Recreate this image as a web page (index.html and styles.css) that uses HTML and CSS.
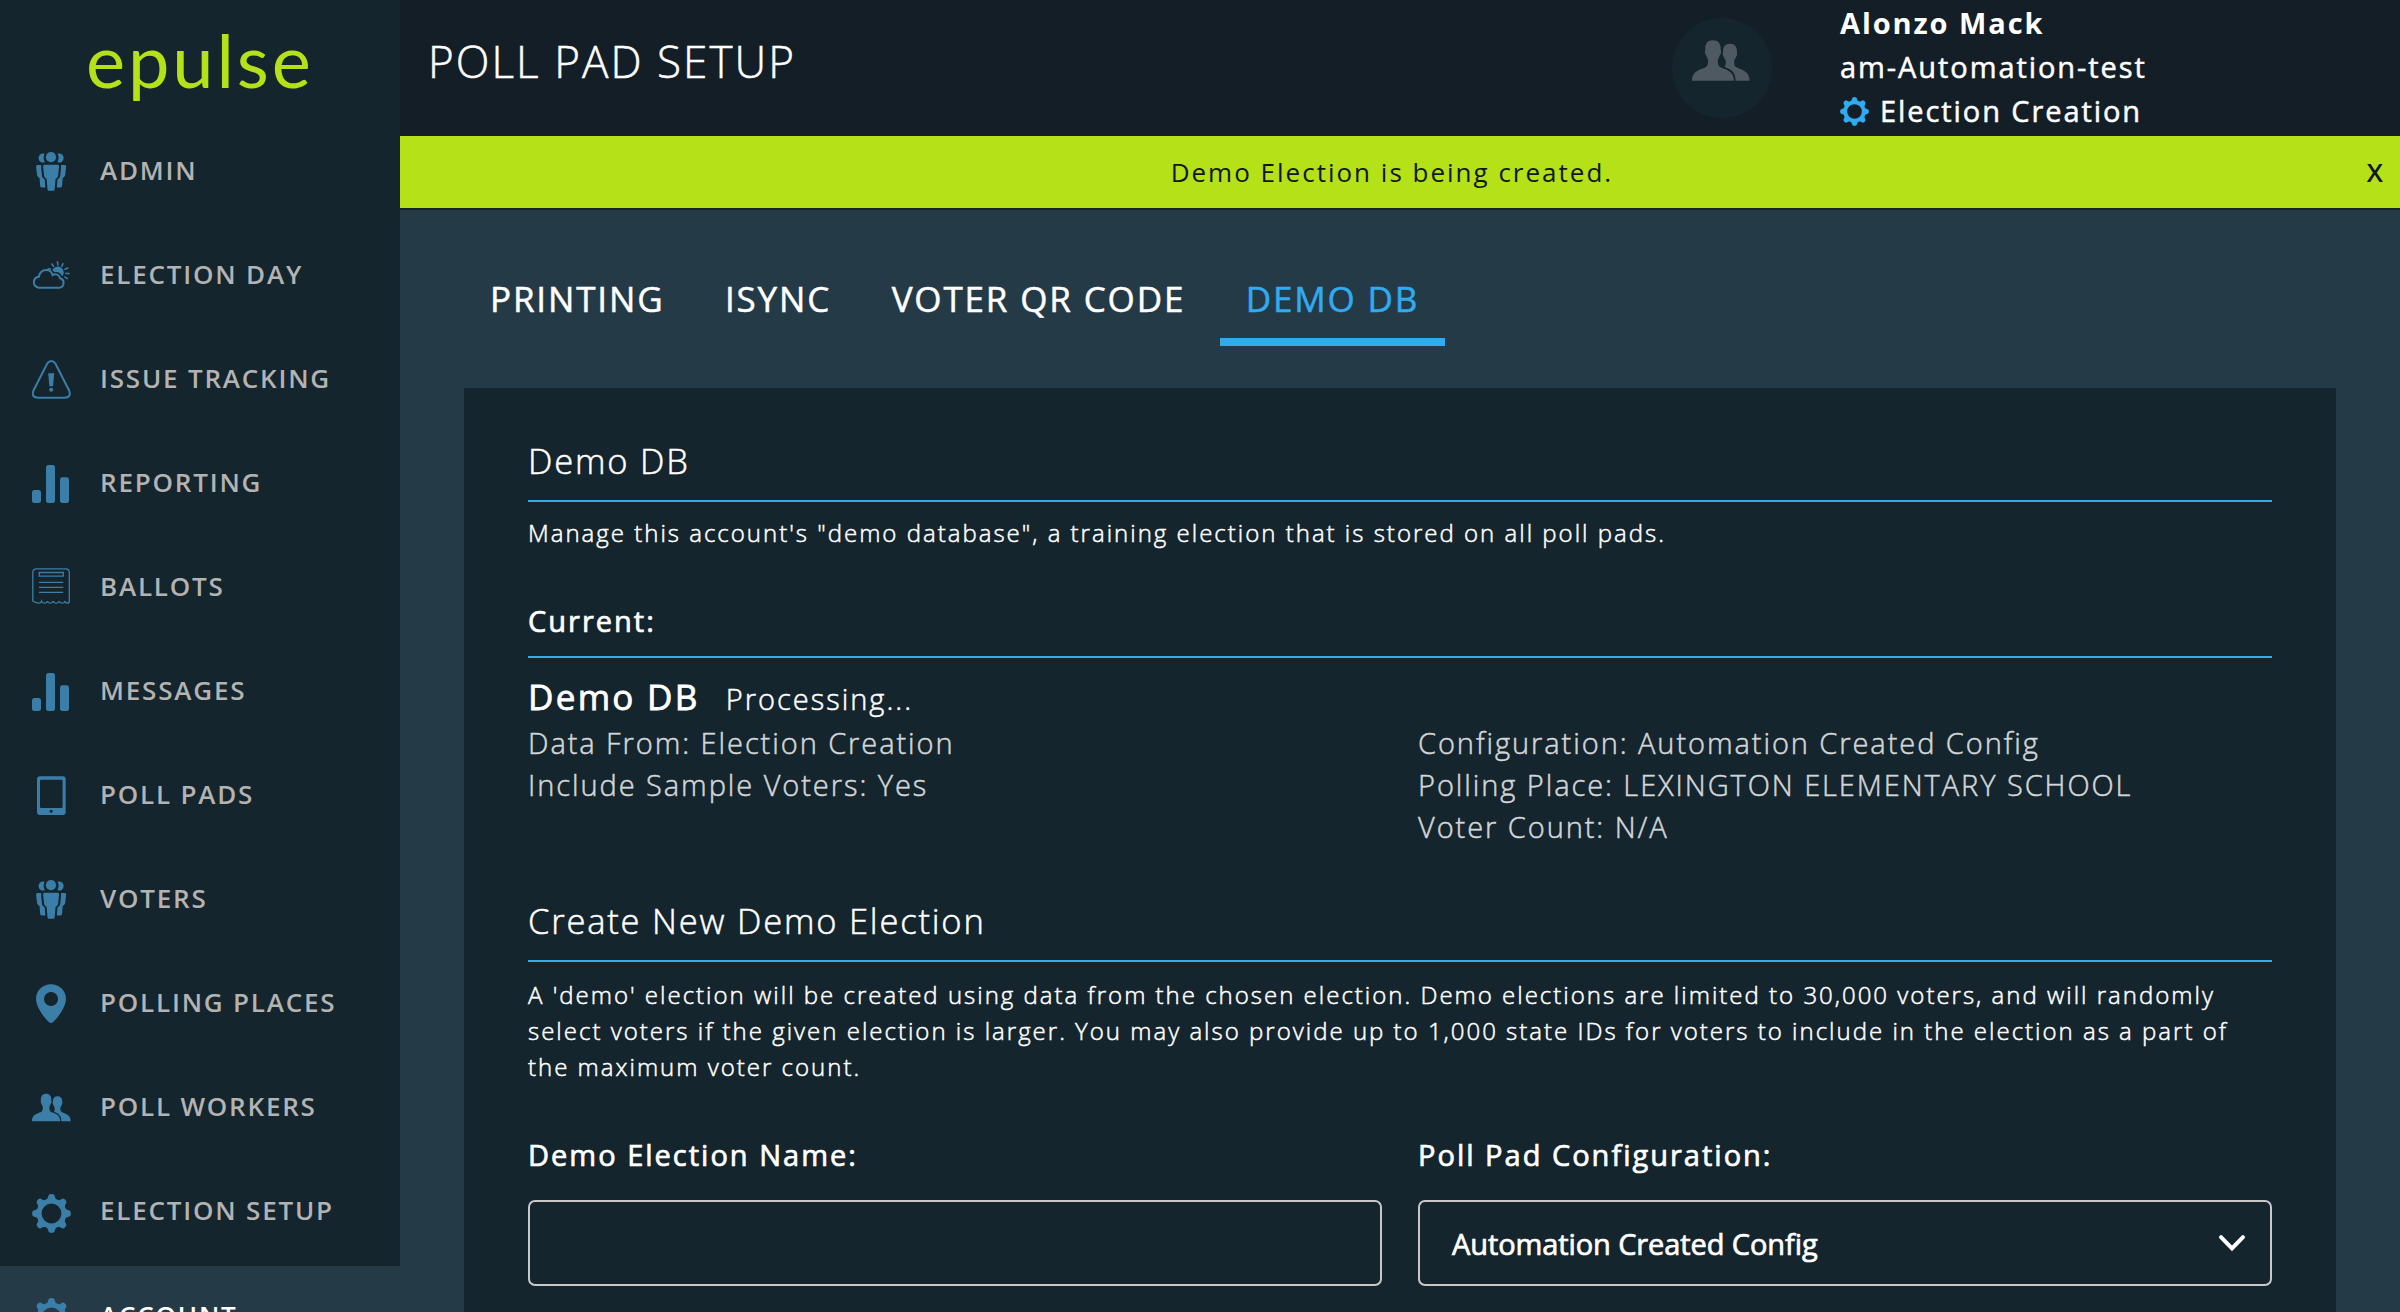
FILE: index.html
```html
<!DOCTYPE html>
<html lang="en">
<head>
<meta charset="utf-8">
<title>Poll Pad Setup</title>
<link rel="stylesheet" href="styles.css">
</head>
<body>
<svg class="sprite" aria-hidden="true">
  <symbol id="i-people" viewBox="0 0 39 39">
    <circle cx="19" cy="5.2" r="5.1"/>
    <path d="M12.4 12.8h13.4q1.4 0 1.3 1.5l-.9 9q-.2 1.8-1.3 2.6l-1.4 1.1-.8 10.2q-.1 1.6-1.6 1.6h-4q-1.5 0-1.6-1.6l-.8-10.2-1.4-1.1q-1.100-.8-1.300-2.600l-.9-9q-.1-1.500 1.300-1.500z"/>
    <path id="side" d="M12.600 1.800C9 .9 6.600 3 6.600 6s2.400 5.300 5.200 4.400l1-.3c-1.500-2.700-1.600-5.600-.2-8.300zM5.400 13h3.900q-.3 1-.2 2l.8 8.600q.2 2 1.800 3.200l1 .8.7 7.900H9.600q-1.300 0-1.400-1.400l-.7-8-1.400-1q-1-.8-1.100-2L4.100 14.500Q4 13 5.400 13z"/>
    <use href="#side" transform="matrix(-1 0 0 1 38.200 0)"/>
  </symbol>
  <symbol id="i-weather" viewBox="0 0 39 39">
    <path d="M6.800 31.700h20.600a4.800 4.800 0 0 0 .6-9.400c-.5-3.600-4.600-5-7.400-3.200C18.900 11.800 8.300 12 6.900 20.800 1 21.400-.6 30 6.800 31.700z" fill="none" stroke="currentColor" stroke-width="2"/>
    <path d="M20.300 14.500a5.900 5.900 0 1 1 9.900 6c-1-3-4-5-7.500-4.300q-1-1-2.400-1.700z"/>
    <path d="M25.300 5.200 26 9.700M31.300 7.200 29.400 10.800M36.400 11.800 32.300 13.600M37.600 17.500H33.200M35.800 22.800 32.400 20.700M19.600 7.500 21.900 11M15.600 12.400 19 13.200" fill="none" stroke="currentColor" stroke-width="1.500"/>
  </symbol>
  <symbol id="i-alert" viewBox="0 0 39 39">
    <path d="M15.100 3.700Q19.200-1.600 23.500 3.700L37.100 30.500Q39.800 37.700 32 37.700H6.500Q-1.200 37.700 1.500 30.500z" fill="none" stroke="currentColor" stroke-width="2"/>
    <path d="M16.200 13.200h6l-1.200 13.100h-3.600z"/><circle cx="19.200" cy="29.800" r="2"/>
  </symbol>
  <symbol id="i-bars" viewBox="0 0 39 39">
    <rect y="26" width="9" height="13" rx="2.500"/><rect x="14" y="1" width="9" height="38" rx="2.500"/><rect x="28" y="13.300" width="9" height="25.700" rx="2.500"/>
  </symbol>
  <symbol id="i-ballot" viewBox="0 0 39 39">
    <path d="M4.500.8h29q3.800 0 3.800 3.800V33q0 2.200-2 2.200t-2.400-2q-.5 2-2.900 2t-2.900-2q-.5 2-3 2t-3-2q-.5 2-2.900 2t-2.900-2q-.5 2-2.900 2t-2.900-2q-.6 2-2.900 2T.8 33V4.600Q.8.8 4.500.8z" fill="none" stroke="currentColor" stroke-width="1.300"/>
    <path d="M7.200 4.500h24.100v3.700H7.200zM7 14.400h24.200M7 19.400h24.200M7 24.300h24.200" fill="none" stroke="currentColor" stroke-width="1.300"/>
  </symbol>
  <symbol id="i-tablet" viewBox="0 0 39 39">
    <path fill-rule="evenodd" d="M8 .3h22.700q3 0 3 3V36q0 3-3 3H8q-3 0-3-3V3.300q0-3 3-3zM9.200 3.700Q8 3.700 8 4.900v26Q8 32 9.200 32h20.200q1.200 0 1.200-1.100v-26q0-1.200-1.200-1.200zM19.200 33.700a1.600 1.600 0 1 0 .01 0z"/>
  </symbol>
  <symbol id="i-pin" viewBox="0 0 39 39">
    <path fill-rule="evenodd" d="M19 .2c8.500 0 15 6.500 15 14.600 0 8.300-8.200 18.800-12.800 23.200q-2.200 2-4.400 0C12.200 33.600 4 23.100 4 14.800 4 6.700 10.500.2 19 .2zM19 8a7 7 0 1 0 .01 0z"/>
  </symbol>
  <symbol id="i-workers" viewBox="0 6 39 27.300">
    <path d="M14.100 6c3.400 0 5.300 2.200 5.200 6 0 .8.300 1.300.2 2.200-.1 1.300-.7 1.500-1 2.300q-.4 1.600-1.100 2.500c0 3.200.1 4.500 2.300 5.500 4.600 1.700 8.500 2.800 8.500 8.800H0c0-6 3.900-7.100 8.500-8.800 2.200-1 2.300-2.300 2.300-5.500q-.7-.9-1.100-2.500c-.3-.8-.9-1-1-2.300-.1-.9.2-1.400.2-2.200-.1-3.800 1.800-6 5.200-6z"/>
    <path d="M25.500 8.400c3.200 0 4.800 2 4.700 5.200 0 .8.300 1.200.1 2.100-.2 1.100-.8 1.400-1 2.100q-.4 1.400-1 2.100c0 2.800.2 3.900 2.200 4.700 4.200 1.600 8.200 3 8.200 8.700h-9.400c0-5.500-2.500-7.600-7.300-9.300q.9-1.400.7-4.100-.6-.7-1-2.100c-.2-.7-.8-1-1-2.100-.1-.9.200-1.300.2-2.100-.1-3.200 1.500-5.200 4.600-5.200z"/>
  </symbol>
  <symbol id="i-gear" viewBox="-19.500 -19.500 39 39">
    <circle r="12.400" fill="none" stroke="currentColor" stroke-width="5"/>
    <path id="tooth" d="M-6.500-12.500Q-3.800-14-3.300-17-3-19.400 0-19.400T3.300-17Q3.800-14 6.500-12.500z"/>
    <use href="#tooth" transform="rotate(45)"/><use href="#tooth" transform="rotate(90)"/><use href="#tooth" transform="rotate(135)"/><use href="#tooth" transform="rotate(180)"/><use href="#tooth" transform="rotate(225)"/><use href="#tooth" transform="rotate(270)"/><use href="#tooth" transform="rotate(315)"/>
  </symbol>
</svg>

<div class="app">
  <aside class="sidebar">
    <div class="logo">epulse</div>
    <nav class="menu">
      <a class="item"><svg class="icon"><use href="#i-people"/></svg><span>ADMIN</span></a>
      <a class="item"><svg class="icon"><use href="#i-weather"/></svg><span>ELECTION DAY</span></a>
      <a class="item"><svg class="icon"><use href="#i-alert"/></svg><span>ISSUE TRACKING</span></a>
      <a class="item"><svg class="icon"><use href="#i-bars"/></svg><span>REPORTING</span></a>
      <a class="item"><svg class="icon"><use href="#i-ballot"/></svg><span>BALLOTS</span></a>
      <a class="item"><svg class="icon"><use href="#i-bars"/></svg><span>MESSAGES</span></a>
      <a class="item"><svg class="icon"><use href="#i-tablet"/></svg><span>POLL PADS</span></a>
      <a class="item"><svg class="icon"><use href="#i-people"/></svg><span>VOTERS</span></a>
      <a class="item"><svg class="icon"><use href="#i-pin"/></svg><span>POLLING PLACES</span></a>
      <a class="item"><svg class="icon"><use href="#i-workers"/></svg><span>POLL WORKERS</span></a>
      <a class="item"><svg class="icon icon-gear"><use href="#i-gear"/></svg><span>ELECTION SETUP</span></a>
      <a class="item active"><svg class="icon icon-gear"><use href="#i-gear"/></svg><span>ACCOUNT</span></a>
    </nav>
  </aside>

  <div class="page">
    <header class="header">
      <h1 class="title">POLL PAD SETUP</h1>
      <div class="avatar"><svg class="avatar-icon"><use href="#i-workers"/></svg></div>
      <div class="user">
        <div class="user-name">Alonzo Mack</div>
        <div>am-Automation-test</div>
        <div class="user-election"><svg class="user-gear"><use href="#i-gear"/></svg>Election Creation</div>
      </div>
    </header>
    <div class="notice"><span class="notice-text">Demo Election is being created.</span><span class="notice-close">X</span></div>

    <main class="main">
      <nav class="tabs">
        <a class="tab">PRINTING</a><a class="tab">ISYNC</a><a class="tab">VOTER QR CODE</a><a class="tab selected">DEMO DB</a>
      </nav>
      <section class="panel">
        <h2 class="heading">Demo DB</h2>
        <p class="text">Manage this account's "demo database", a training election that is stored on all poll pads.</p>

        <h3 class="subheading">Current:</h3>
        <div class="status"><span class="status-name">Demo DB</span><span class="status-state">Processing...</span></div>
        <div class="columns details">
          <div>
            <div>Data From: Election Creation</div>
            <div>Include Sample Voters: Yes</div>
          </div>
          <div>
            <div>Configuration: Automation Created Config</div>
            <div>Polling Place: LEXINGTON ELEMENTARY SCHOOL</div>
            <div>Voter Count: N/A</div>
          </div>
        </div>

        <h2 class="heading">Create New Demo Election</h2>
        <p class="text text-long">A 'demo' election will be created using data from the chosen election. Demo elections are limited to 30,000 voters, and will randomly<br>select voters if the given election is larger. You may also provide up to 1,000 state IDs for voters to include in the election as a part of<br>the maximum voter count.</p>

        <div class="columns form">
          <div>
            <div class="label">Demo Election Name:</div>
            <div class="field"></div>
          </div>
          <div>
            <div class="label">Poll Pad Configuration:</div>
            <div class="field select"><span>Automation Created Config</span>
              <svg class="chevron" viewBox="0 0 28 18"><path d="M3 3.200 14 14.500 25 3.200" fill="none" stroke="#fff" stroke-width="4" stroke-linecap="round"/></svg>
            </div>
          </div>
        </div>
      </section>
    </main>
  </div>
</div>
</body>
</html>
```
FILE: styles.css
```css
* { box-sizing: border-box; }
body { margin: 0; font-family: "Open Sans", sans-serif; color: #fff; background: #253a47; letter-spacing: 2px; -webkit-text-stroke: .5px currentColor; }
h1, h2, h3, p { margin: 0; font-weight: 400; }
.sprite { display: none; }
.app { display: flex; height: 1312px; overflow: hidden; }

.sidebar { width: 400px; flex: none; background: #15252d; -webkit-text-stroke: 0; }
.logo { height: 122px; padding-left: 86px; font: 400 74px/120px Lato, sans-serif; letter-spacing: 2.9px; color: #b4e118; }
.menu { display: flex; flex-direction: column; }
.item { display: flex; align-items: flex-start; gap: 29px; height: 104px; flex: none; padding: 30px 0 0 32px; font-size: 26px; line-height: 36px; font-weight: 600; letter-spacing: 1.8px; color: #b3b3b3; }
.item.active { background: #253a47; color: #fff; }
.active span { margin-top: 1px; }
.icon { width: 39px; height: 39px; color: #3b7ea8; fill: currentColor; }
.icon-gear { margin-top: 2px; }

.page { flex: 1; min-width: 0; }
.header { display: flex; height: 136px; background: #141e27; }
.title { width: 1272px; padding-left: 28px; font-size: 44px; line-height: 122px; font-weight: 300; letter-spacing: 2.05px; }
.avatar { width: 100px; height: 100px; margin-top: 18px; padding: 22px 0 0 20px; border-radius: 50%; background: #15252d; }
.avatar-icon { width: 58px; height: 41px; color: #4f5961; fill: currentColor; }
.user { margin-left: 68px; padding-top: 1px; font-size: 29px; line-height: 44px; letter-spacing: 1.92px; }
.user-name { font-weight: 700; -webkit-text-stroke: 0; }
.user-election { display: flex; align-items: center; gap: 11px; }
.user-gear { width: 29px; height: 29px; color: #31abef; fill: currentColor; }

.notice { display: flex; height: 74px; padding: 0 15px 0 17px; border-bottom: 2px solid #15252d; background: #b4e118; color: #10181c; font-size: 26px; line-height: 72px; -webkit-text-stroke: 0; }
.notice-text { flex: 1; text-align: center; }
.notice-close { font-weight: 600; }

.main { padding: 65px 64px 0; }
.tabs { display: flex; gap: 8.5px; margin-bottom: 42px; font-size: 35px; line-height: 48px; letter-spacing: 1.85px; }
.tab { padding: 0 26px 15px; border-bottom: 8px solid transparent; }
.tab.selected { color: #31abef; border-color: #31abef; }

.panel { height: 924px; padding: 49px 64px 0; background: #15252d; }
.heading { padding-bottom: 15px; border-bottom: 2px solid #31abef; font-size: 34.5px; line-height: 48px; font-weight: 300; letter-spacing: 1.8px; }
.text { margin-top: 13px; font-size: 24px; line-height: 36px; font-weight: 300; white-space: nowrap; }
.text-long { margin-top: 15px; }
.subheading { margin-top: 49px; padding-bottom: 14px; border-bottom: 2px solid #31abef; font-size: 29px; line-height: 42px; -webkit-text-stroke-width: .7px; }
.status { display: flex; align-items: baseline; gap: 26px; height: 48px; margin-top: 16px; line-height: 46px; }
.status-name { font-size: 35px; letter-spacing: 2.3px; -webkit-text-stroke-width: .8px; }
.status-state { font-size: 29px; font-weight: 300; }
.columns { display: grid; grid-template-columns: 1fr 1fr; column-gap: 36px; }
.details { margin-bottom: 49px; font-size: 29px; line-height: 42px; font-weight: 300; letter-spacing: 1.93px; color: #d3d6d8; }
.form { margin-top: 49px; }
.label { margin-bottom: 24px; font-size: 29px; line-height: 42px; -webkit-text-stroke-width: .7px; }
.field { height: 86px; border: 2px solid #c8c8c8; border-radius: 7px; }
.select { display: flex; align-items: center; justify-content: space-between; padding: 0 24px 0 32px; font-size: 29px; letter-spacing: -.1px; -webkit-text-stroke-width: .7px; }
.chevron { width: 28px; height: 18px; }
```
